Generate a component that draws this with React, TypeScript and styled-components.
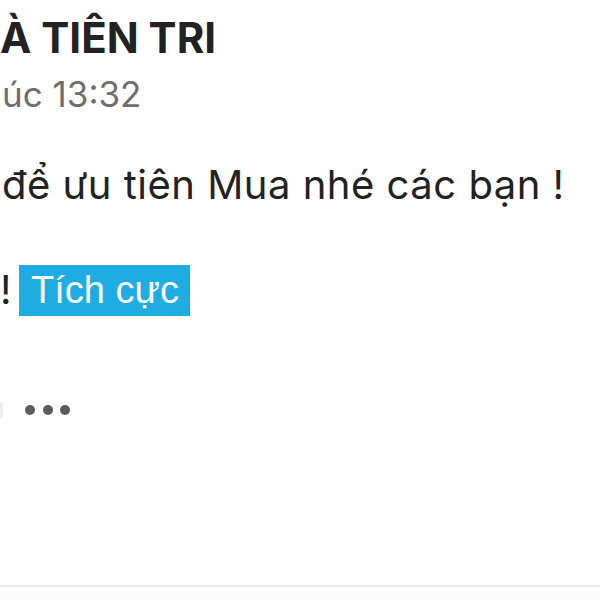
import React from "react";
import styled, { createGlobalStyle } from "styled-components";

const GlobalStyle = createGlobalStyle`
  html, body {
    margin: 0;
    padding: 0;
    background: #ffffff;
  }
  body {
    font-family: Inter, "Liberation Sans", Arial, sans-serif;
    -webkit-font-smoothing: antialiased;
  }
`;

const Page = styled.div`
  width: 600px;
  height: 600px;
  overflow: hidden;
  display: flex;
  flex-direction: column;
  background: #ffffff;
`;

const Post = styled.div`
  display: flex;
  flex-direction: column;
  padding-top: 13px;
`;

const Author = styled.div`
  font-size: 42px;
  line-height: 50px;
  font-weight: 700;
  color: #222222;
  white-space: nowrap;
`;

const Time = styled.div`
  margin-top: 9px;
  font-size: 35px;
  line-height: 44px;
  color: #6e6e6e;
  padding-left: 2px;
  white-space: nowrap;
`;

const Paragraph = styled.div<{ $gap: number; $indent: number }>`
  margin-top: ${(p) => p.$gap}px;
  font-size: 40px;
  line-height: 52px;
  color: #222222;
  padding-left: ${(p) => p.$indent}px;
  letter-spacing: 0.5px;
  white-space: nowrap;
  display: flex;
  align-items: center;
  gap: 7px;
`;

const Badge = styled.span`
  display: inline-block;
  background: #1eace2;
  color: #ffffff;
  font-family: "Liberation Sans", Arial, sans-serif;
  font-size: 38px;
  letter-spacing: 0;
  line-height: 51px;
  padding: 0 11px 0 12px;
`;

const Actions = styled.div`
  margin-top: 82px;
  display: flex;
  align-items: center;
  height: 24px;
`;

const Sliver = styled.span`
  width: 3px;
  height: 16px;
  background: #eeeeee;
  margin-right: 22px;
`;

const Dot = styled.span`
  width: 10px;
  height: 10px;
  border-radius: 50%;
  background: #5b5b5b;
  margin-right: 7.5px;
`;

const Footer = styled.div`
  margin-top: auto;
  height: 13px;
  border-top: 2px solid #ececec;
  background: #fcfcfc;
`;

export default function App() {
  return (
    <>
      <GlobalStyle />
      <Page>
        <Post>
          <Author>À TIÊN TRI</Author>
          <Time>úc 13:32</Time>
          <Paragraph $gap={43} $indent={2}>
            để ưu tiên Mua nhé các bạn !
          </Paragraph>
          <Paragraph $gap={53} $indent={0}>
            <span>!</span>
            <Badge>Tích cực</Badge>
          </Paragraph>
          <Actions>
            <Sliver />
            <Dot />
            <Dot />
            <Dot />
          </Actions>
        </Post>
        <Footer />
      </Page>
    </>
  );
}
